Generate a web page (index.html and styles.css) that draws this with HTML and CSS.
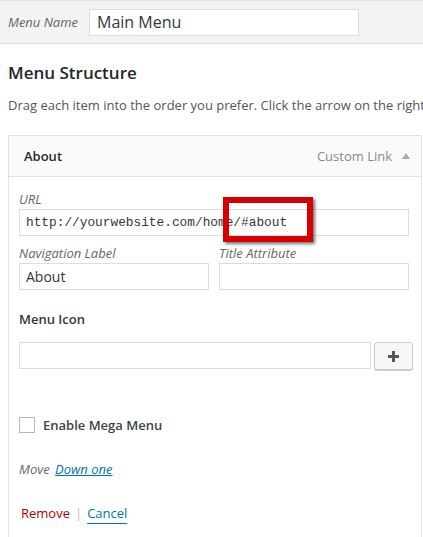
FILE: index.html
```html
<!DOCTYPE html>
<html>
<head>
<meta charset="utf-8">
<link rel="stylesheet" href="styles.css">
</head>
<body>
<div class="namebar">
  <label class="name-label">Menu Name</label>
  <div class="name-input">Main Menu</div>
</div>
<div class="main">
  <h3 class="title">Menu Structure</h3>
  <p class="desc">Drag each item into the order you prefer. Click the arrow on the right</p>
  <div class="card">
    <div class="card-head">
      <span class="item-title">About</span>
      <span class="item-type">Custom Link <span class="arrow"></span></span>
    </div>
    <div class="card-body">
      <div class="field">
        <div class="flabel">URL</div>
        <div class="input mono">http://yourwebsite.com/home/#about<span class="highlight"></span></div>
      </div>
      <div class="row2">
        <div class="field">
          <div class="flabel">Navigation Label</div>
          <div class="input">About</div>
        </div>
        <div class="field">
          <div class="flabel">Title Attribute</div>
          <div class="input"></div>
        </div>
      </div>
      <div class="icon-label">Menu Icon</div>
      <div class="icon-row">
        <div class="input grow"></div>
        <div class="btn"><svg width="11" height="11" viewBox="0 0 11 11"><rect x="4" y="0" width="3" height="11" fill="#50575e"/><rect x="0" y="4" width="11" height="3" fill="#50575e"/></svg></div>
      </div>
      <div class="check-row">
        <span class="checkbox"></span>
        <span class="check-text">Enable Mega Menu</span>
      </div>
      <div class="move"><span class="move-label">Move</span> <a class="link">Down one</a></div>
      <div class="actions"><a class="remove">Remove</a><span class="sep">|</span><a class="cancel">Cancel</a></div>
    </div>
  </div>
</div>
</body>
</html>
```
FILE: styles.css
```css
html, body {
  margin: 0;
  padding: 0;
  background: #fff;
  overflow: hidden;
}
body {
  font-family: "Open Sans", sans-serif;
  font-size: 13px;
  color: #444;
  width: 423px;
  height: 537px;
}
.namebar {
  display: flex;
  align-items: center;
  height: 42px;
  background: #f3f3f3;
  border-top: 1px solid #e3e3e3;
  border-bottom: 1px solid #dcdcdc;
  padding-left: 8px;
}
.name-label {
  font-style: italic;
  color: #666;
  font-size: 13px;
  width: 81px;
}
.name-input {
  box-sizing: border-box;
  width: 270px;
  height: 27px;
  background: #fff;
  border: 1px solid #ddd;
  font-size: 16px;
  line-height: 24px;
  padding-left: 7px;
  color: #32373c;
}
.main {
  padding: 0 0 0 8px;
}
.title {
  margin: 0;
  padding-top: 17px;
  font-size: 17px;
  font-weight: 600;
  color: #23282d;
  line-height: 24px;
}
.desc {
  margin: 11px 0 0;
  width: 415px;
  overflow: hidden;
  white-space: nowrap;
  color: #555;
  line-height: 19px;
}
.card {
  margin-top: 20px;
  width: 414px;
  box-sizing: border-box;
  border: 1px solid #e3e3e3;
  border-bottom: none;
  height: 410px;
}
.card-head {
  display: flex;
  align-items: center;
  justify-content: space-between;
  height: 40px;
  background: #fafafa;
  border-bottom: 1px solid #e3e3e3;
  padding: 0 11px 0 15px;
}
.item-title {
  font-weight: 600;
  color: #23282d;
}
.item-type {
  color: #888;
  display: flex;
  align-items: center;
}
.arrow {
  display: inline-block;
  margin-left: 10px;
  width: 0;
  height: 0;
  border-left: 4px solid transparent;
  border-right: 4px solid transparent;
  border-bottom: 6px solid #aaa;
}
.card-body {
  padding: 13px 12px 0 10px;
}
.flabel {
  font-style: italic;
  color: #666;
  line-height: 19px;
}
.input {
  box-sizing: border-box;
  height: 27px;
  border: 1px solid #ddd;
  background: #fff;
  padding-left: 6px;
  line-height: 25px;
  color: #32373c;
  font-size: 14px;
  position: relative;
}
.mono {
  font-family: "Liberation Mono", monospace;
  font-size: 12.8px;
  color: #32373c;
}
.highlight {
  position: absolute;
  left: 203px;
  top: -13px;
  width: 90px;
  height: 45px;
  box-sizing: border-box;
  border: 6px solid #d70000;
  box-shadow: 2px 2px 3px rgba(0,0,0,0.55);
}
.row2 {
  display: grid;
  grid-template-columns: 190px 190px;
  column-gap: 10px;
  margin-top: 8px;
}
.icon-label {
  font-weight: 600;
  color: #32373c;
  margin-top: 20px;
  line-height: 19px;
}
.icon-row {
  display: flex;
  gap: 3px;
  margin-top: 13px;
}
.grow {
  width: 352px;
  flex-shrink: 0;
}
.btn {
  flex-shrink: 0;
  box-sizing: border-box;
  width: 39px;
  height: 28px;
  background: #f7f7f7;
  border: 1px solid #ccc;
  border-radius: 3px;
  box-shadow: 0 1px 0 #ccc;
  display: flex;
  align-items: center;
  justify-content: center;
}
.check-row {
  display: flex;
  align-items: center;
  margin-top: 46px;
}
.checkbox {
  box-sizing: border-box;
  width: 16px;
  height: 16px;
  border: 1px solid #b4b9be;
  background: #fff;
}
.check-text {
  margin-left: 8px;
  font-size: 13px;
  font-weight: 600;
  color: #3c434a;
}
.move {
  margin-top: 26px;
  font-style: italic;
  color: #666;
}
.link {
  color: #0073aa;
  text-decoration: underline;
  margin-left: 2px;
}
.actions {
  margin-top: 26px;
  padding-left: 2px;
  font-size: 13px;
}
.remove {
  color: #a00;
}
.sep {
  color: #bbb;
  margin: 0 5px 0 5px;
}
.cancel {
  color: #0073aa;
  text-decoration: underline;
  text-underline-offset: 5px;
}
```
